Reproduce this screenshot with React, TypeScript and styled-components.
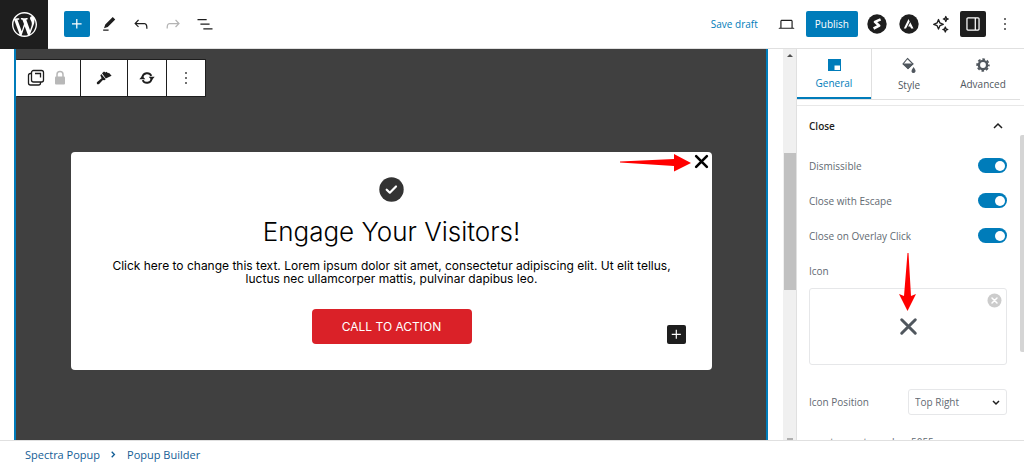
import React from "react";
import styled, { createGlobalStyle, css } from "styled-components";

const ui = `"Open Sans", "Noto Sans", sans-serif`;
const display = `Inter, "Open Sans", sans-serif`;
const blue = "#007cba";
const ink = "#1e1e1e";

const Global = createGlobalStyle`
  *, *::before, *::after { box-sizing: border-box; }
  body { margin: 0; background: #fff; color: ${ink}; font-family: ${ui}; font-size: 10px; }
  button, select, input { font: inherit; color: inherit; margin: 0; }
  svg { display: block; flex: none; }
`;

const Editor = styled.div`
  display: flex;
  flex-direction: column;
  height: 100vh;
`;

const TopBar = styled.header`
  display: flex;
  align-items: center;
  flex: none;
  height: 49px;
  padding-right: 6px;
  border-bottom: 1px solid #e0e0e0;
`;

const HomeLink = styled.a`
  display: flex;
  align-items: center;
  justify-content: center;
  width: 48px;
  height: 49px;
  margin-bottom: -1px;
  background: ${ink};
  color: #fff;
`;

const ToolGroup = styled.div`
  display: flex;
  align-items: center;
  gap: 6px;
  padding-left: 16px;
`;

const ActionGroup = styled.div`
  display: flex;
  align-items: center;
  gap: 6px;
  margin-left: auto;
`;

const IconButton = styled.button<{ $tone?: "primary" | "dark"; $faded?: boolean }>`
  display: flex;
  align-items: center;
  justify-content: center;
  width: 26px;
  height: 26px;
  padding: 0;
  border: 0;
  border-radius: 2px;
  background: none;
  color: ${(p) => (p.$faded ? "#b4b4b4" : ink)};
  ${(p) => p.$tone && css`
    background: ${p.$tone === "primary" ? blue : ink};
    color: #fff;
  `}
`;

const DraftButton = styled.button`
  padding: 0 10px;
  border: 0;
  background: none;
  color: ${blue};
`;

const PublishButton = styled.button`
  height: 26px;
  padding: 0 9px;
  border: 0;
  border-radius: 2px;
  background: ${blue};
  color: #fff;
`;

const Body = styled.div`
  display: flex;
  flex: 1;
  min-height: 0;
`;

const Canvas = styled.main`
  flex: 1;
  min-width: 0;
  padding: 0 15px 0 14px;
  overflow: hidden;
`;

const Overlay = styled.div`
  height: 100%;
  padding-top: 10px;
  border: solid ${blue};
  border-width: 0 2px;
  background: #404040;
`;

const BlockToolbar = styled.div`
  display: flex;
  width: fit-content;
  height: 38px;
  border: 1px solid ${ink};
  border-left: 0;
  border-radius: 1px;
  background: #fff;
`;

const BlockGroup = styled.div<{ $pad: number }>`
  display: flex;
  align-items: center;
  padding: 0 ${(p) => p.$pad}px;
  & + & { border-left: 1px solid ${ink}; }
  ${IconButton} { width: 24px; }
`;

const Popup = styled.section`
  position: relative;
  display: flex;
  flex-direction: column;
  align-items: center;
  margin: 55px 54px 0 55px;
  padding: 25px 36px 26px;
  border-radius: 4px;
  background: #fff;
  color: #000;
  font-family: ${display};
  text-align: center;
`;

const PopupTitle = styled.h2`
  margin: 13px 0 10px;
  font-size: 26px;
  font-weight: 300;
  line-height: 34px;
`;

const PopupText = styled.p`
  margin: 0;
  font-size: 12px;
  line-height: 13px;
`;

const CallButton = styled.button`
  width: 160px;
  height: 35px;
  margin-top: 24px;
  border: 0;
  border-radius: 4px;
  background: #da2128;
  color: #fff;
  font-size: 12px;
`;

const ClosePopup = styled.button`
  position: absolute;
  top: 2px;
  right: 3px;
  padding: 0;
  border: 0;
  background: none;
`;

const Inserter = styled.button`
  position: absolute;
  right: 26px;
  bottom: 26px;
  display: flex;
  align-items: center;
  justify-content: center;
  width: 19px;
  height: 19px;
  padding: 0;
  border: 0;
  border-radius: 2px;
  background: ${ink};
  color: #fff;
`;

const RightArrow = styled.svg`
  position: absolute;
  top: 1px;
  right: 21px;
`;

const DownArrow = styled.svg`
  position: absolute;
  top: -36px;
  left: 50%;
  margin-left: -10px;
`;

const CanvasScroll = styled.div`
  display: flex;
  flex-direction: column;
  align-items: center;
  width: 13px;
  padding-top: 5px;
  background: #f0f0f0;
`;

const CanvasThumb = styled.div`
  width: 12px;
  height: 137px;
  margin: 96px 0 auto;
  background: #c1c1c1;
`;

const Sidebar = styled.aside`
  display: flex;
  flex-direction: column;
  width: 228px;
  border-left: 1px solid #e0e0e0;
  overflow: hidden;
`;

const Tabs = styled.div`
  display: flex;
  flex: none;
  height: 51px;
  margin-right: 4px;
  border-bottom: 1px solid #e0e0e0;
`;

const Tab = styled.button<{ $active?: boolean; $low?: boolean }>`
  display: flex;
  flex: 1;
  flex-direction: column;
  align-items: center;
  gap: ${(p) => (p.$low ? 3 : 4)}px;
  height: 50px;
  padding: ${(p) => (p.$low ? 8 : 9)}px 0 0;
  border: 0;
  background: none;
  color: #50575e;
  line-height: 16px;
  ${(p) => p.$active && css`
    padding-top: 10px;
    border-right: 1px solid #e0e0e0;
    box-shadow: inset 0 -2px ${blue};
    color: ${blue};
  `}
`;

const PanelArea = styled.div`
  display: flex;
  flex: 1;
  min-height: 0;
  margin-top: 5px;
  border-top: 1px solid #e8e8e8;
`;

const Panel = styled.div`
  flex: 1;
  padding: 0 13px 0 12px;
  overflow: hidden;
  color: #626a72;
`;

const SidebarScroll = styled.div`
  width: 4px;
  height: 217px;
  margin-top: 29px;
  border-radius: 2px 0 0 2px;
  background: #d5d5d5;
`;

const PanelHeading = styled.button`
  display: flex;
  align-items: center;
  justify-content: space-between;
  width: 100%;
  height: 40px;
  margin-bottom: 2px;
  padding: 0 4px 0 0;
  border: 0;
  background: none;
  color: ${ink};
  font-weight: 600;
`;

const Field = styled.label`
  display: flex;
  align-items: center;
  justify-content: space-between;
  height: 35px;
`;

const Toggle = styled.input`
  appearance: none;
  display: flex;
  align-items: center;
  justify-content: flex-end;
  width: 29px;
  height: 15px;
  padding: 0 2px;
  border-radius: 8px;
  background: ${blue};
  &::before {
    content: "";
    width: 10px;
    height: 10px;
    border-radius: 50%;
    background: #fff;
  }
`;

const IconBox = styled.div`
  position: relative;
  display: flex;
  align-items: center;
  justify-content: center;
  height: 77px;
  margin-bottom: 19px;
  border: 1px solid #e6e7e9;
  border-radius: 3px;
  color: #50575e;
`;

const ClearButton = styled.button`
  position: absolute;
  top: 4px;
  right: 4px;
  padding: 0;
  border: 0;
  background: none;
`;

const SelectWrap = styled.span`
  position: relative;
  display: flex;
  align-items: center;
  width: 99px;
  svg { position: absolute; right: 6px; color: ${ink}; pointer-events: none; }
`;

const Select = styled.select`
  appearance: none;
  width: 100%;
  height: 26px;
  padding: 0 6px;
  border: 1px solid #e6e7e9;
  border-radius: 3px;
  background: #fff;
`;

const Hint = styled.p`
  margin: 15px 0 0;
  line-height: 16px;
  white-space: nowrap;
`;

const Footer = styled.footer`
  flex: none;
  height: 28px;
  padding-left: 25px;
  border-top: 1px solid #e0e0e0;
`;

const Crumbs = styled.nav`
  display: flex;
  align-items: center;
  gap: 9px;
  height: 27px;
  color: #135e96;
  font-size: 11px;
  font-weight: 500;
  a { color: inherit; text-decoration: none; }
`;

const WordPressMark = () => (
  <svg width="25" height="25" viewBox="0 0 20 20" fill="currentColor">
    <path d="M20 10c0-5.51-4.49-10-10-10C4.48 0 0 4.49 0 10c0 5.52 4.48 10 10 10 5.51 0 10-4.48 10-10zM7.78 15.37L4.37 6.22c.55-.02 1.17-.08 1.17-.08.5-.06.44-1.13-.06-1.11 0 0-1.45.11-2.37.11-.18 0-.37 0-.58-.01C4.12 2.69 6.87 1.11 10 1.11c2.33 0 4.45.87 6.05 2.34-.68-.11-1.65.39-1.65 1.58 0 .74.45 1.36.9 2.1.35.61.55 1.36.55 2.46 0 1.49-1.4 5-1.4 5l-3.03-8.37c.54-.02.82-.17.82-.17.5-.05.44-1.25-.06-1.22 0 0-1.44.12-2.38.12-.87 0-2.33-.12-2.33-.12-.5-.03-.56 1.2-.06 1.22l.92.08 1.26 3.41zM17.41 10c.24-.64.74-1.87.43-4.25.7 1.29 1.05 2.71 1.05 4.25 0 3.29-1.73 6.24-4.4 7.78.97-2.59 1.94-5.2 2.92-7.78zM6.1 18.09C3.12 16.65 1.11 13.53 1.11 10c0-1.3.23-2.48.72-3.59C3.25 10.3 4.67 14.2 6.1 18.09zm4.03-6.63l2.58 6.98c-.86.29-1.76.45-2.71.45-.79 0-1.57-.11-2.29-.33.81-2.38 1.62-4.74 2.42-7.1z" />
  </svg>
);

const Icon = ({ d, size = 20 }: { d: string; size?: number }) => (
  <svg width={size} height={size} viewBox="0 0 24 24" fill="currentColor"><path d={d} /></svg>
);

const paths = {
  plus: "M11 12.5V17.5H12.5V12.5H17.5V11H12.5V6H11V11H6V12.5H11Z",
  edit: "m19.500 6.500-3-3-9 9-1.500 4.500 4.500-1.500 9-9Zm-8 12H5V20h6.500v-1.500Z",
  undo: "M18.3 11.7c-.6-.6-1.4-.9-2.3-.9H6.7l2.9-3.3-1.1-1-4.5 5L8.500 16l1-1-2.700-2.700H16c.5 0 .9.2 1.300.5 1 1 1 3.400 1 4.500v.3h1.500v-.2c0-1.500 0-4.300-1.500-5.700z",
  redo: "M15.600 6.500l-1.100 1 2.900 3.300H8c-.9 0-1.700.3-2.300.9-1.400 1.500-1.400 4.200-1.400 5.600v.2h1.500v-.3c0-1.100 0-3.500 1-4.500.3-.3.7-.5 1.300-.5h9.200L14.500 15l1.100 1.100 4.600-4.600-4.600-5z",
  list: "M3 6h11v1.500H3V6Zm3.500 5.500h11V13h-11v-1.500ZM21 17H10v1.500h11V17Z",
  more: "M13 19h-2v-2h2v2zm0-6h-2v-2h2v2zm0-6h-2V5h2v2z",
  laptop: "M20.500 16h-.7V8c0-1.100-.9-2-2-2H6.200c-1.100 0-2 .9-2 2v8h-.7c-.8 0-1.500.7-1.500 1.500h20c0-.8-.7-1.500-1.500-1.500zM5.700 8c0-.3.2-.5.5-.5h11.600c.3 0 .5.2.5.5v8H5.700V8z",
  panel: "M18 4H6c-1.100 0-2 .9-2 2v12c0 1.100.9 2 2 2h12c1.100 0 2-.9 2-2V6c0-1.100-.9-2-2-2zm-4 14.500H6c-.3 0-.5-.2-.5-.5V6c0-.3.2-.5.5-.5h8v13zm4.500-.5c0 .3-.2.5-.5.5h-2.500v-13H18c.3 0 .5.2.5.5v12z",
};

const Cross = ({ size, width = 2 }: { size: number; width?: number }) => (
  <svg width={size} height={size} viewBox="0 0 14 14" fill="none" stroke="currentColor" strokeWidth={width} strokeLinecap="round">
    <path d="M2 2l10 10M12 2L2 12" />
  </svg>
);

const SpectraMark = () => (
  <svg width="20" height="20" viewBox="0 0 20 20">
    <circle cx="10" cy="10" r="9.700" fill={ink} />
    <path d="M13.600 5.400L8 7.900L12.200 11.700L6.600 14.500" fill="none" stroke="#fff" strokeWidth="2.600" strokeLinejoin="round" />
  </svg>
);

const AstraMark = () => (
  <svg width="20" height="20" viewBox="0 0 20 20">
    <circle cx="10" cy="10" r="9.700" fill={ink} />
    <path d="M9.500 5L4.800 14.500H7L10.700 7.400ZM11.300 8.200L9.200 12.400H11.100L12.100 14.500H14.500Z" fill="#fff" />
  </svg>
);

const SparkleMark = () => (
  <svg width="18" height="18" viewBox="0 0 18 18" fill="none" stroke="currentColor" strokeWidth="1.300" strokeLinejoin="round">
    <path d="M6.500 4.500L7.900 7.900L11.300 9.300L7.900 10.700L6.500 14.100L5.100 10.700L1.700 9.300L5.100 7.900Z" />
    <path d="M13.800 1.500L14.500 3.300L16.300 4L14.500 4.700L13.800 6.500L13.100 4.700L11.300 4L13.100 3.300ZM13.300 12L14 13.800L15.800 14.500L14 15.200L13.300 17L12.600 15.200L10.800 14.500L12.600 13.800Z" />
  </svg>
);

const PopupMark = () => (
  <svg width="18" height="18" viewBox="0 0 18 18" fill="none" stroke="currentColor" strokeWidth="1.300">
    <rect x="4.500" y="1.500" width="12" height="11.500" rx="2" />
    <path d="M4.500 4.500H3.500Q1.500 4.500 1.500 6.500V14Q1.500 16 3.500 16H11.500Q13.500 16 13.500 14V13M8 4.500H13.500V8.500" />
  </svg>
);

const LockMark = () => (
  <svg width="12" height="16" viewBox="0 0 12 16">
    <rect x="1" y="6.500" width="10" height="8" rx="1" fill="#b8b8b8" />
    <path d="M3 7V4.500Q3 1.500 6 1.500T9 4.500V7" fill="none" stroke="#b8b8b8" strokeWidth="1.500" />
  </svg>
);

const BrushMark = () => (
  <svg width="16" height="16" viewBox="0 0 16 16" fill="currentColor">
    <path d="M6 3.300L8 1.500L9.500 2.600L10.500 1.700L12.100 3.300L12.900 2.800L15.600 5.700L9.800 8.600ZM5.200 3.900L9.700 9.300L8.400 10.300L6.900 9.900L3.100 13.900Q1.900 14.800 1 13.900Q.4 12.900 1.200 12.100L5.600 8.300L4.400 5.600Z" />
  </svg>
);

const SyncMark = () => (
  <svg width="16" height="16" viewBox="0 0 16 16" fill="none" stroke="currentColor" strokeWidth="1.900">
    <path d="M3.400 7.200A4.700 4.700 0 0 1 12.300 5.900M12.600 8.800A4.700 4.700 0 0 1 3.700 10.100" />
    <path d="M9.700 6.800H15.700L12.700 10.200ZM.3 9.200H6.300L3.300 5.800Z" fill="currentColor" stroke="none" />
  </svg>
);

const CheckMark = () => (
  <svg width="25" height="25" viewBox="0 0 25 25">
    <circle cx="12.500" cy="12.500" r="12.200" fill="#333" />
    <path d="M7.700 12.700L10.800 15.700L17 9.500" fill="none" stroke="#fff" strokeWidth="2.200" strokeLinecap="round" strokeLinejoin="round" />
  </svg>
);

const GeneralMark = () => (
  <svg width="13" height="12" viewBox="0 0 13 12"><path d="M0 0H13V12H0ZM6.500 6.500V11H12V6.500Z" fill={blue} fillRule="evenodd" /></svg>
);

const StyleMark = () => (
  <svg width="15" height="17" viewBox="0 0 15 17">
    <path d="M5.500 1.500L11 7L6 11.500L1 7Z" fill="none" stroke="#50575e" strokeWidth="1.100" />
    <path d="M1 6.500H11.500L6 12.300ZM11.500 10Q14 13 13.500 14.500Q12.800 16 11.500 16Q9.800 16 9.500 14.500Q9.400 13 11.500 10Z" fill="#50575e" />
  </svg>
);

const GearMark = () => (
  <svg width="14" height="14" viewBox="0 0 14 14" fill="none" stroke="#50575e">
    <circle cx="7" cy="7" r="4.100" strokeWidth="2.400" />
    <circle cx="7" cy="7" r="5.800" strokeWidth="1.800" strokeDasharray="2.600 1.955" strokeDashoffset="1.300" />
  </svg>
);

const Chevron = ({ d, size = 10, width = 1.5 }: { d: string; size?: number; width?: number }) => (
  <svg width={size} height={size} viewBox="0 0 10 10" fill="none" stroke="currentColor" strokeWidth={width}><path d={d} /></svg>
);

const toggles = ["Dismissible", "Close with Escape", "Close on Overlay Click"];

export default function App() {
  return (
    <Editor>
      <Global />
      <TopBar>
        <HomeLink href="#" aria-label="View posts"><WordPressMark /></HomeLink>
        <ToolGroup>
          <IconButton $tone="primary" aria-label="Add block"><Icon d={paths.plus} /></IconButton>
          <IconButton aria-label="Tools"><Icon d={paths.edit} /></IconButton>
          <IconButton aria-label="Undo"><Icon d={paths.undo} /></IconButton>
          <IconButton $faded aria-label="Redo"><Icon d={paths.redo} /></IconButton>
          <IconButton aria-label="Document overview"><Icon d={paths.list} /></IconButton>
        </ToolGroup>
        <ActionGroup>
          <DraftButton>Save draft</DraftButton>
          <IconButton aria-label="Preview"><Icon d={paths.laptop} size={19} /></IconButton>
          <PublishButton>Publish</PublishButton>
          <IconButton aria-label="Spectra"><SpectraMark /></IconButton>
          <IconButton aria-label="Astra"><AstraMark /></IconButton>
          <IconButton aria-label="Design library"><SparkleMark /></IconButton>
          <IconButton $tone="dark" aria-label="Settings"><Icon d={paths.panel} /></IconButton>
          <IconButton aria-label="Options"><Icon d={paths.more} /></IconButton>
        </ActionGroup>
      </TopBar>
      <Body>
        <Canvas>
          <Overlay>
            <BlockToolbar>
              <BlockGroup $pad={8}>
                <IconButton aria-label="Popup Builder"><PopupMark /></IconButton>
                <IconButton $faded aria-label="Lock"><LockMark /></IconButton>
              </BlockGroup>
              <BlockGroup $pad={11}><IconButton aria-label="Copy styles"><BrushMark /></IconButton></BlockGroup>
              <BlockGroup $pad={7}><IconButton aria-label="Transform"><SyncMark /></IconButton></BlockGroup>
              <BlockGroup $pad={7}><IconButton aria-label="More"><Icon d={paths.more} /></IconButton></BlockGroup>
            </BlockToolbar>
            <Popup>
              <CheckMark />
              <PopupTitle>Engage Your Visitors!</PopupTitle>
              <PopupText>
                Click here to change this text. Lorem ipsum dolor sit amet, consectetur adipiscing elit. Ut elit tellus,
                <br />luctus nec ullamcorper mattis, pulvinar dapibus leo.
              </PopupText>
              <CallButton>CALL TO ACTION</CallButton>
              <ClosePopup aria-label="Close popup"><Cross size={15} width={2.4} /></ClosePopup>
              <Inserter aria-label="Add block"><Icon d={paths.plus} size={19} /></Inserter>
              <RightArrow width="71" height="19" viewBox="0 0 71 19">
                <path d="M0 8.500L54 6V1L71 10L54 18.500V13L0 9.500Z" fill="#f00" />
              </RightArrow>
            </Popup>
          </Overlay>
        </Canvas>
        <CanvasScroll>
          <svg width="6" height="3" viewBox="0 0 6 3"><path d="M0 3L3 0L6 3Z" fill="#505050" /></svg>
          <CanvasThumb />
          <svg width="6" height="2" viewBox="0 0 6 2"><path d="M0 0H6V2H0Z" fill="#b0b0b0" /></svg>
        </CanvasScroll>
        <Sidebar>
          <Tabs>
            <Tab $active><GeneralMark />General</Tab>
            <Tab $low><StyleMark />Style</Tab>
            <Tab><GearMark />Advanced</Tab>
          </Tabs>
          <PanelArea>
            <Panel>
              <PanelHeading>Close<Chevron d="M1 7L5 3L9 7" /></PanelHeading>
              {toggles.map((label) => (
                <Field key={label}>{label}<Toggle type="checkbox" defaultChecked /></Field>
              ))}
              <Field as="div">Icon</Field>
              <IconBox>
                <Cross size={19} width={2.2} />
                <ClearButton aria-label="Remove icon">
                  <svg width="15" height="15" viewBox="0 0 15 15">
                    <circle cx="7.500" cy="7.500" r="7" fill="#ccc" />
                    <path d="M5 5L10 10M10 5L5 10" stroke="#fff" strokeWidth="1.500" strokeLinecap="round" />
                  </svg>
                </ClearButton>
                <DownArrow width="19" height="59" viewBox="0 0 19 59">
                  <path d="M9.500 0H10.500L13 43L18 41L9.500 58L1 41L6 43Z" fill="#f00" />
                </DownArrow>
              </IconBox>
              <Field>
                Icon Position
                <SelectWrap>
                  <Select defaultValue="Top Right"><option>Top Right</option><option>Top Left</option></Select>
                  <Chevron d="M2 4L5 7L8 4" />
                </SelectWrap>
              </Field>
              <Hint>spectra-post-number-5055</Hint>
            </Panel>
            <SidebarScroll />
          </PanelArea>
        </Sidebar>
      </Body>
      <Footer>
        <Crumbs>
          <a href="#">Spectra Popup</a>
          <Chevron d="M3 2L6 5L3 8" size={9} />
          <a href="#">Popup Builder</a>
        </Crumbs>
      </Footer>
    </Editor>
  );
}
